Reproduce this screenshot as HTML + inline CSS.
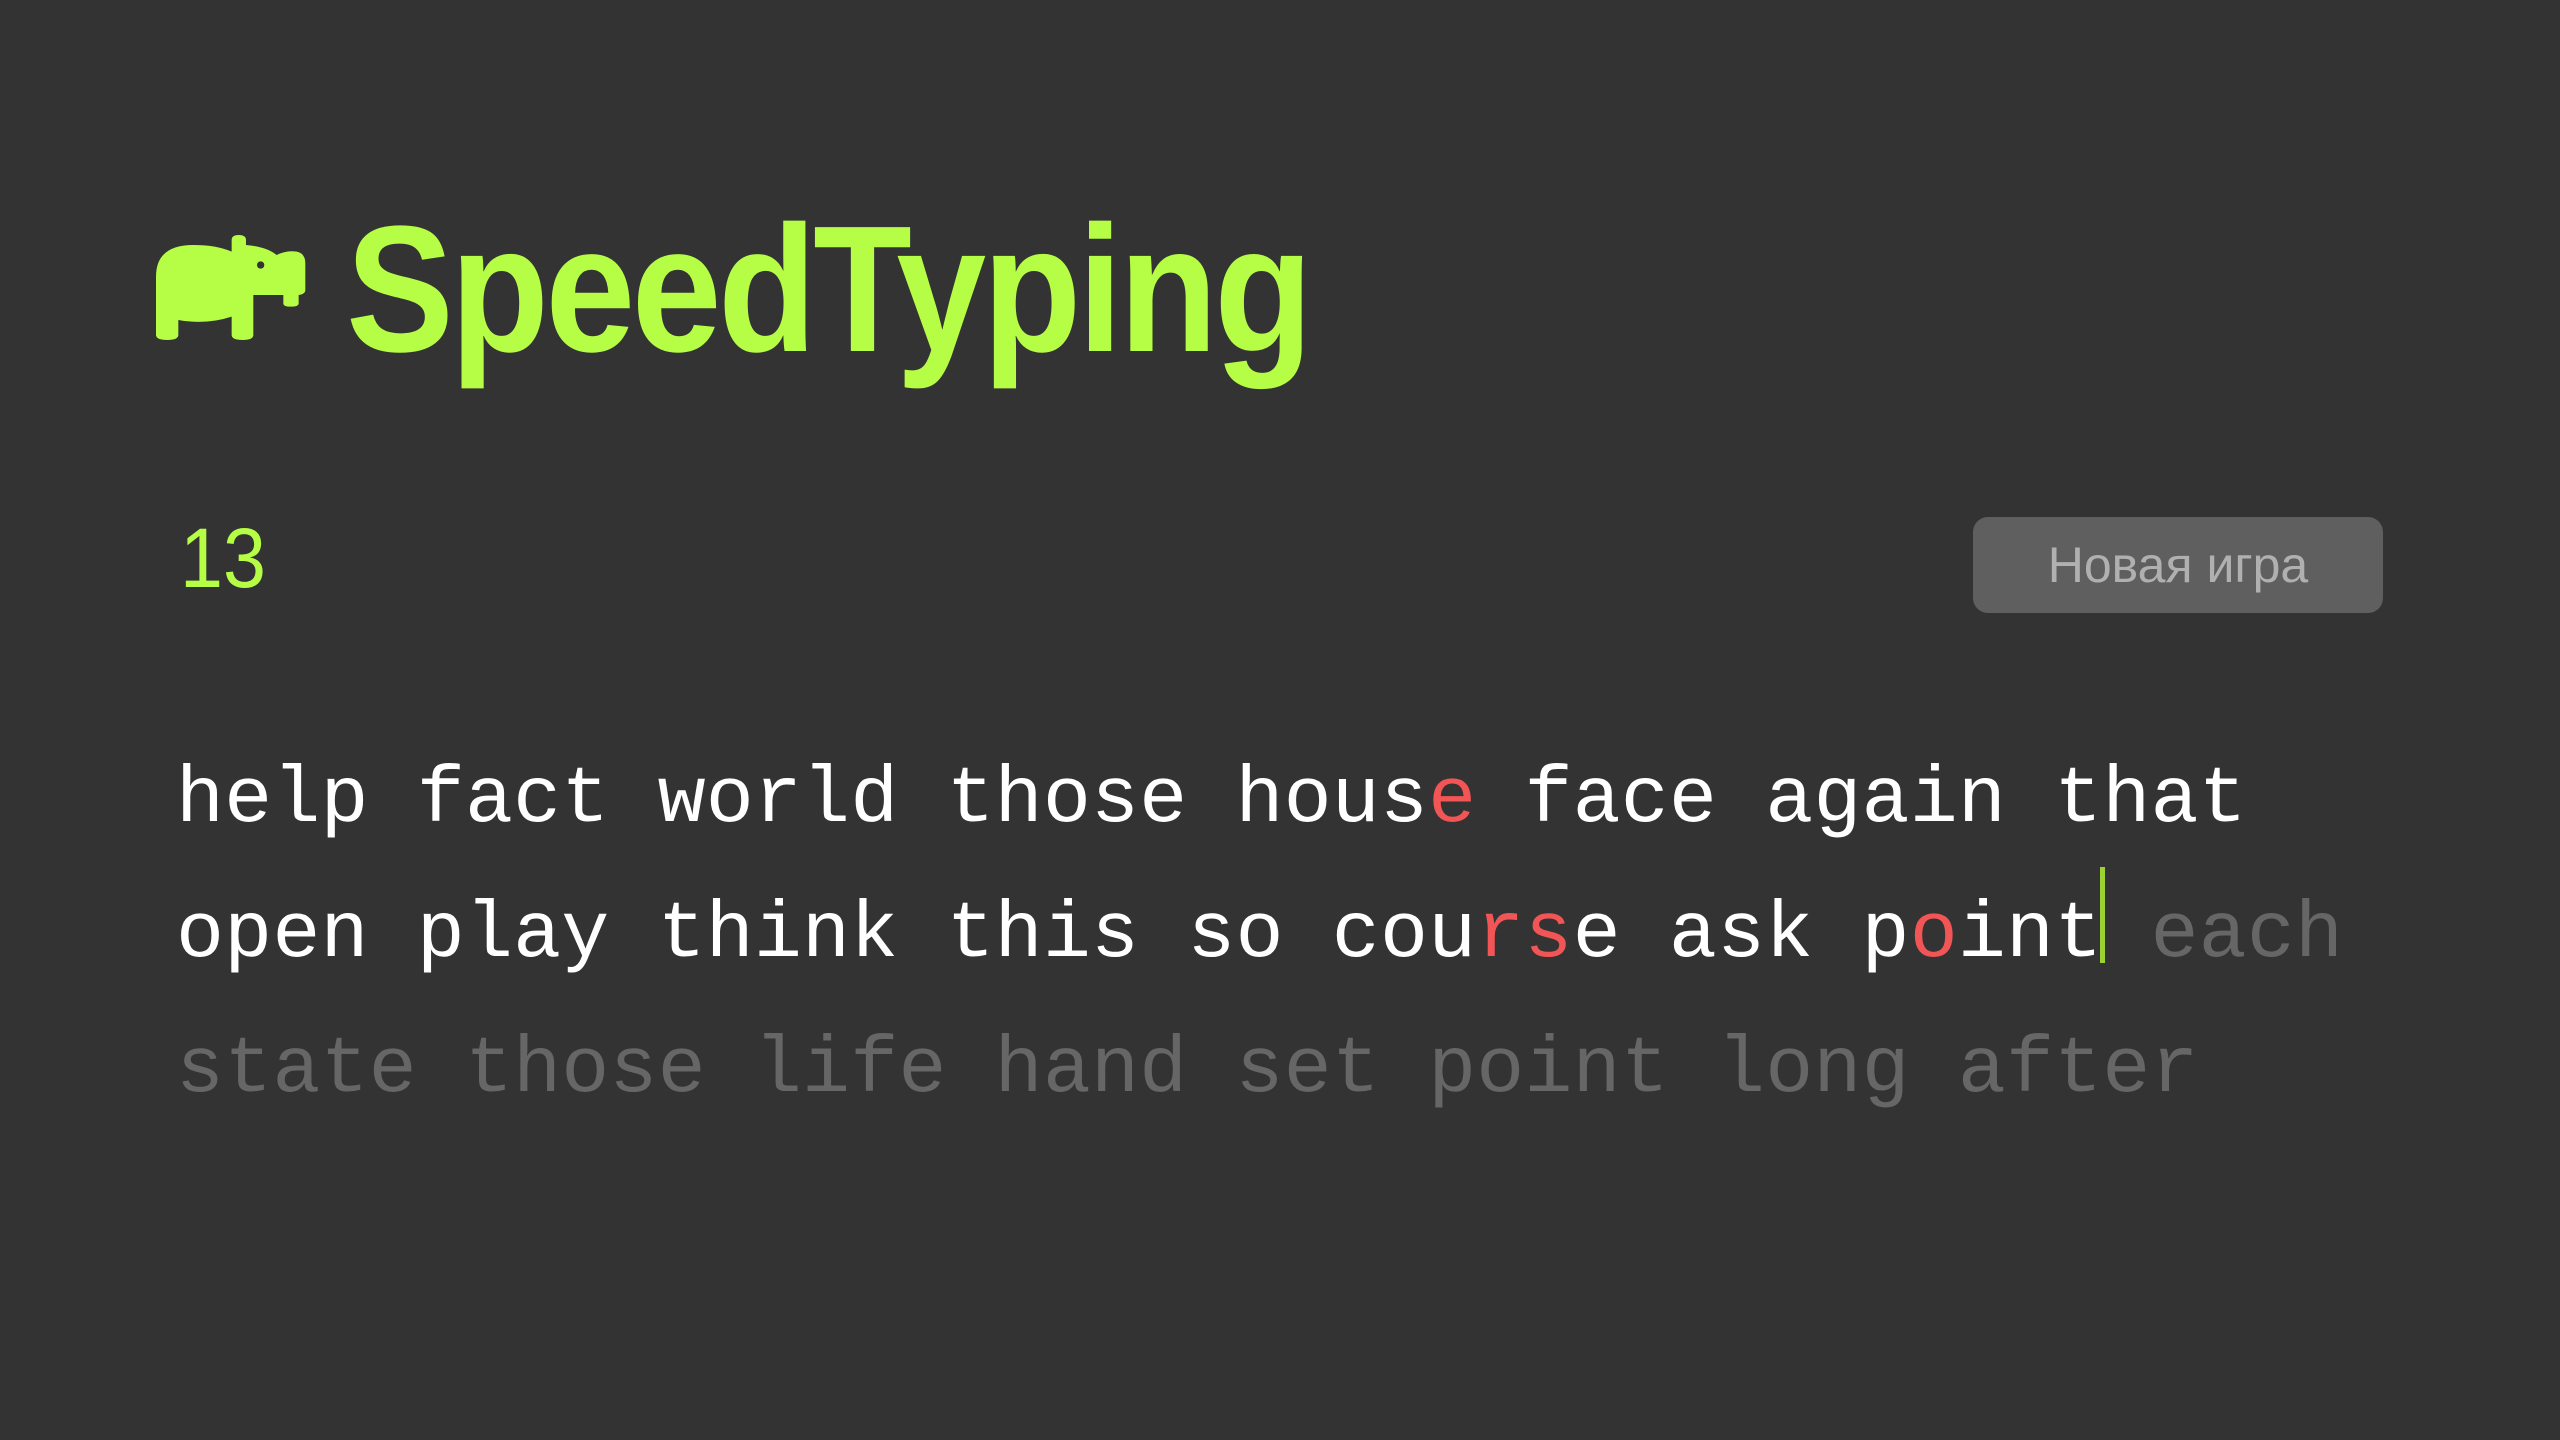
<!DOCTYPE html>
<html><head><meta charset="utf-8"><style>
html,body{margin:0;padding:0;background:#333;width:2560px;height:1440px;overflow:hidden}
.logo{position:absolute;left:346px;top:190px;font-family:"Liberation Sans",sans-serif;font-weight:bold;font-size:180px;color:#b6fd45;letter-spacing:-4px;line-height:200px;white-space:nowrap;transform:scaleX(0.898);transform-origin:0 0}
.score{position:absolute;left:180px;top:508px;font-family:"Liberation Sans",sans-serif;font-size:84px;color:#b6fd45;line-height:100px;transform:scaleX(0.92);transform-origin:0 0}
.btn{position:absolute;left:1973px;top:517px;width:410px;height:96px;background:#5f5f5f;border-radius:15px;color:#b0b0b0;font-family:"Liberation Sans",sans-serif;font-size:50px;text-align:center;line-height:96px}
.txt{position:absolute;left:176px;top:733px;font-family:"Liberation Mono",monospace;font-size:80px;letter-spacing:0.15px;line-height:135px;white-space:pre;color:#fff}
.r{color:#f25555}.g{color:#666}
.c{display:inline-block;width:0;position:relative}
.c::after{content:"";position:absolute;left:-2px;top:-89px;width:5px;height:96px;background:#9bd132}
</style></head><body>
<svg style="position:absolute;left:0;top:0" width="2560" height="1440">
<g transform="translate(140,220) scale(0.3333)" fill="#b6fd45">
<path d="M48 170 Q48 75 160 75 Q230 75 275 95 L275 60 Q275 45 296 45 Q318 45 318 60 L318 75 Q380 80 410 105 Q440 90 470 95 Q496 100 496 130 L496 210 Q496 222 476 225 L476 250 Q476 260 452 260 Q430 260 430 250 L430 225 L340 225 L340 345 Q340 360 308 360 Q275 360 275 345 L275 290 Q200 315 115 300 L115 345 Q115 360 82 360 Q48 360 48 345 Z"/>
<circle cx="362" cy="135" r="11" fill="#333"/>
</g></svg>
<div class="logo">SpeedTyping</div>
<div class="score">13</div>
<div class="btn">Новая игра</div>
<div class="txt">help fact world those hous<span class="r">e</span> face again that
open play think this so cou<span class="r">rs</span>e ask p<span class="r">o</span>int<span class="c"></span><span class="g"> each</span>
<span class="g">state those life hand set point long after</span></div>
</body></html>
